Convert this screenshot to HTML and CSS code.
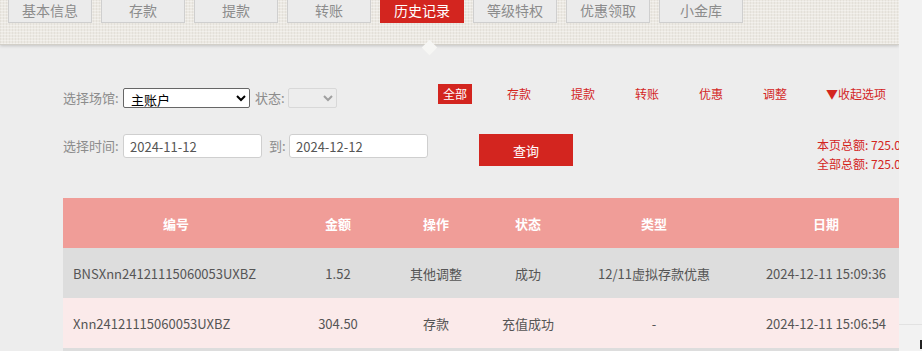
FILE: index.html
```html
<!DOCTYPE html>
<html lang="zh-CN">
<head>
  <meta charset="UTF-8" />
  <meta name="viewport" content="width=device-width, initial-scale=1.0" />
  <title>历史记录</title>
  <link rel="stylesheet" href="styles.css">
</head>
<body>
  <div class="page">
    <!-- 顶部导航 -->
    <div class="nav">
      <a class="tab">基本信息</a>
      <a class="tab">存款</a>
      <a class="tab">提款</a>
      <a class="tab">转账</a>
      <a class="tab active">历史记录</a>
      <a class="tab">等级特权</a>
      <a class="tab">优惠领取</a>
      <a class="tab">小金库</a>
      <span class="arrow"></span>
    </div>

    <!-- 筛选 -->
    <div class="filters">
      <div class="row row-one">
        <label class="lbl">选择场馆:</label>
        <select class="venue">
          <option>主账户</option>
        </select>
        <label class="status-label">状态:</label>
        <select class="status" disabled></select>
        <div class="cats">
          <a class="cat on">全部</a>
          <a class="cat">存款</a>
          <a class="cat">提款</a>
          <a class="cat">转账</a>
          <a class="cat">优惠</a>
          <a class="cat">调整</a>
          <a class="cat more">▼收起选项</a>
        </div>
      </div>
      <div class="row row-two">
        <label class="lbl">选择时间:</label>
        <input type="text" class="date" value="2024-11-12" />
        <label class="to">到:</label>
        <input type="text" class="date" value="2024-12-12" />
        <button class="search">查询</button>
        <div class="totals">
          <p>本页总额: 725.00</p>
          <p>全部总额: 725.00</p>
        </div>
      </div>
    </div>

    <!-- 记录表 -->
    <table class="records">
      <thead>
        <tr>
          <th class="c-id">编号</th>
          <th class="c-amt">金额</th>
          <th class="c-op">操作</th>
          <th class="c-st">状态</th>
          <th class="c-type">类型</th>
          <th class="c-date">日期</th>
        </tr>
      </thead>
      <tbody>
        <tr>
          <td class="id">BNSXnn24121115060053UXBZ</td>
          <td>1.52</td>
          <td>其他调整</td>
          <td>成功</td>
          <td>12/11虚拟存款优惠</td>
          <td>2024-12-11 15:09:36</td>
        </tr>
        <tr>
          <td class="id">Xnn24121115060053UXBZ</td>
          <td>304.50</td>
          <td>存款</td>
          <td>充值成功</td>
          <td>-</td>
          <td>2024-12-11 15:06:54</td>
        </tr>
        <tr>
          <td class="id">&nbsp;</td>
          <td></td><td></td><td></td><td></td><td></td>
        </tr>
      </tbody>
    </table>
  </div>

  <div class="gutter"><span class="mark"></span></div>
</body>
</html>
```

FILE: styles.css
```css
* { box-sizing: border-box; margin: 0; padding: 0; }
body { display: flex; height: 351px; overflow: hidden; background: #f2f2f2; font-family: "Microsoft YaHei", "Noto Sans CJK SC", sans-serif; }

.page { width: 899px; flex: none; height: 351px; overflow: hidden; background: #ededed; }

/* 导航 */
.nav { position: relative; height: 44px; display: flex; gap: 9px; padding-left: 8px;
  background-color: #ece9e3;
  background-image: repeating-linear-gradient(0deg, rgba(255,255,255,.35) 0 1px, transparent 1px 3px),
                    repeating-linear-gradient(90deg, rgba(200,196,186,.25) 0 1px, transparent 1px 3px);
  box-shadow: 0 1px 0 #d2cfc8, 0 2px 3px rgba(0,0,0,.18); }
.tab { width: 84px; height: 23px; line-height: 20px; text-align: center; font-size: 14px; color: #8c8c8c;
  background: #ebebeb; border: 1px solid #cfcfcf; border-top: none; }
.tab.active { background: #d3251f; border-color: #d3251f; color: #fff; }
.arrow { position: absolute; left: 424px; top: 42px; width: 11px; height: 11px; background: #f6f6f4; transform: rotate(45deg); }

/* 筛选 */
.filters { padding-left: 63px; }
.row { display: flex; font-size: 13px; color: #8c8c8c; }
.row > * { flex: none; white-space: nowrap; }
.lbl { width: 58px; }
.row-one { margin-top: 44px; height: 20px; align-items: center; }
.row-one label { line-height: 20px; }
.venue { margin-left: 2px; width: 127px; height: 20px; font-size: 13px; color: #000; border: 1px solid #666; border-radius: 2px; background: #fff; font-family: inherit; padding-left: 3px; }
.status-label { margin-left: 5px; width: 31px; }
.status { margin-left: 2px; width: 49px; height: 20px; border: 1px solid #d0d0d0; border-radius: 2px; background: #ededed; }
.cats { display: flex; gap: 30px; margin-left: 101px; margin-top: -8px; }
.cat { width: 34px; height: 20px; line-height: 20px; text-align: center; font-size: 12px; color: #d3251f; }
.cat.on { background: #d3251f; color: #fff; }
.cat.more { width: auto; padding-left: 4px; white-space: nowrap; }

.row-two { margin-top: 26px; height: 32px; align-items: flex-start; }
.row-two label { line-height: 24px; }
.date { margin-left: 2px; width: 139px; height: 24px; border: 1px solid #cfcfcf; border-radius: 3px; background: #fff;
  padding-left: 6px; font-size: 13px; color: #555; font-family: inherit; }
.to { margin-left: 7px; width: 18px; }
.search { margin-left: 51px; width: 94px; height: 32px; border: none; background: #d3251f; color: #fff; font-size: 13px; font-family: inherit; }
.totals { margin-left: 244px; padding-top: 1px; font-size: 12px; color: #d3251f; line-height: 19px; }

/* 记录表 */
.records { margin: 32px 0 0 63px; width: 852px; border-collapse: collapse; table-layout: fixed; font-size: 13px; color: #555; }
.records th { height: 50px; background: #f09d98; color: #fff; font-weight: bold; text-align: center; }
.records td { height: 50px; text-align: center; }
.records td.id { text-align: left; padding-left: 10px; }
.records tbody tr:nth-child(odd) { background: #dddddd; }
.records tbody tr:nth-child(even) { background: #fbeaea; }
.c-id { width: 226px; }
.c-amt { width: 98px; }
.c-op { width: 98px; }
.c-st { width: 86px; }
.c-type { width: 166px; }
.c-date { width: 178px; }

.gutter { flex: 1; margin-top: 324px; border-top: 1px solid #e2e2e2; position: relative; }
.mark { position: absolute; right: 0; top: 15px; width: 2px; height: 9px; background: #222; }
```
